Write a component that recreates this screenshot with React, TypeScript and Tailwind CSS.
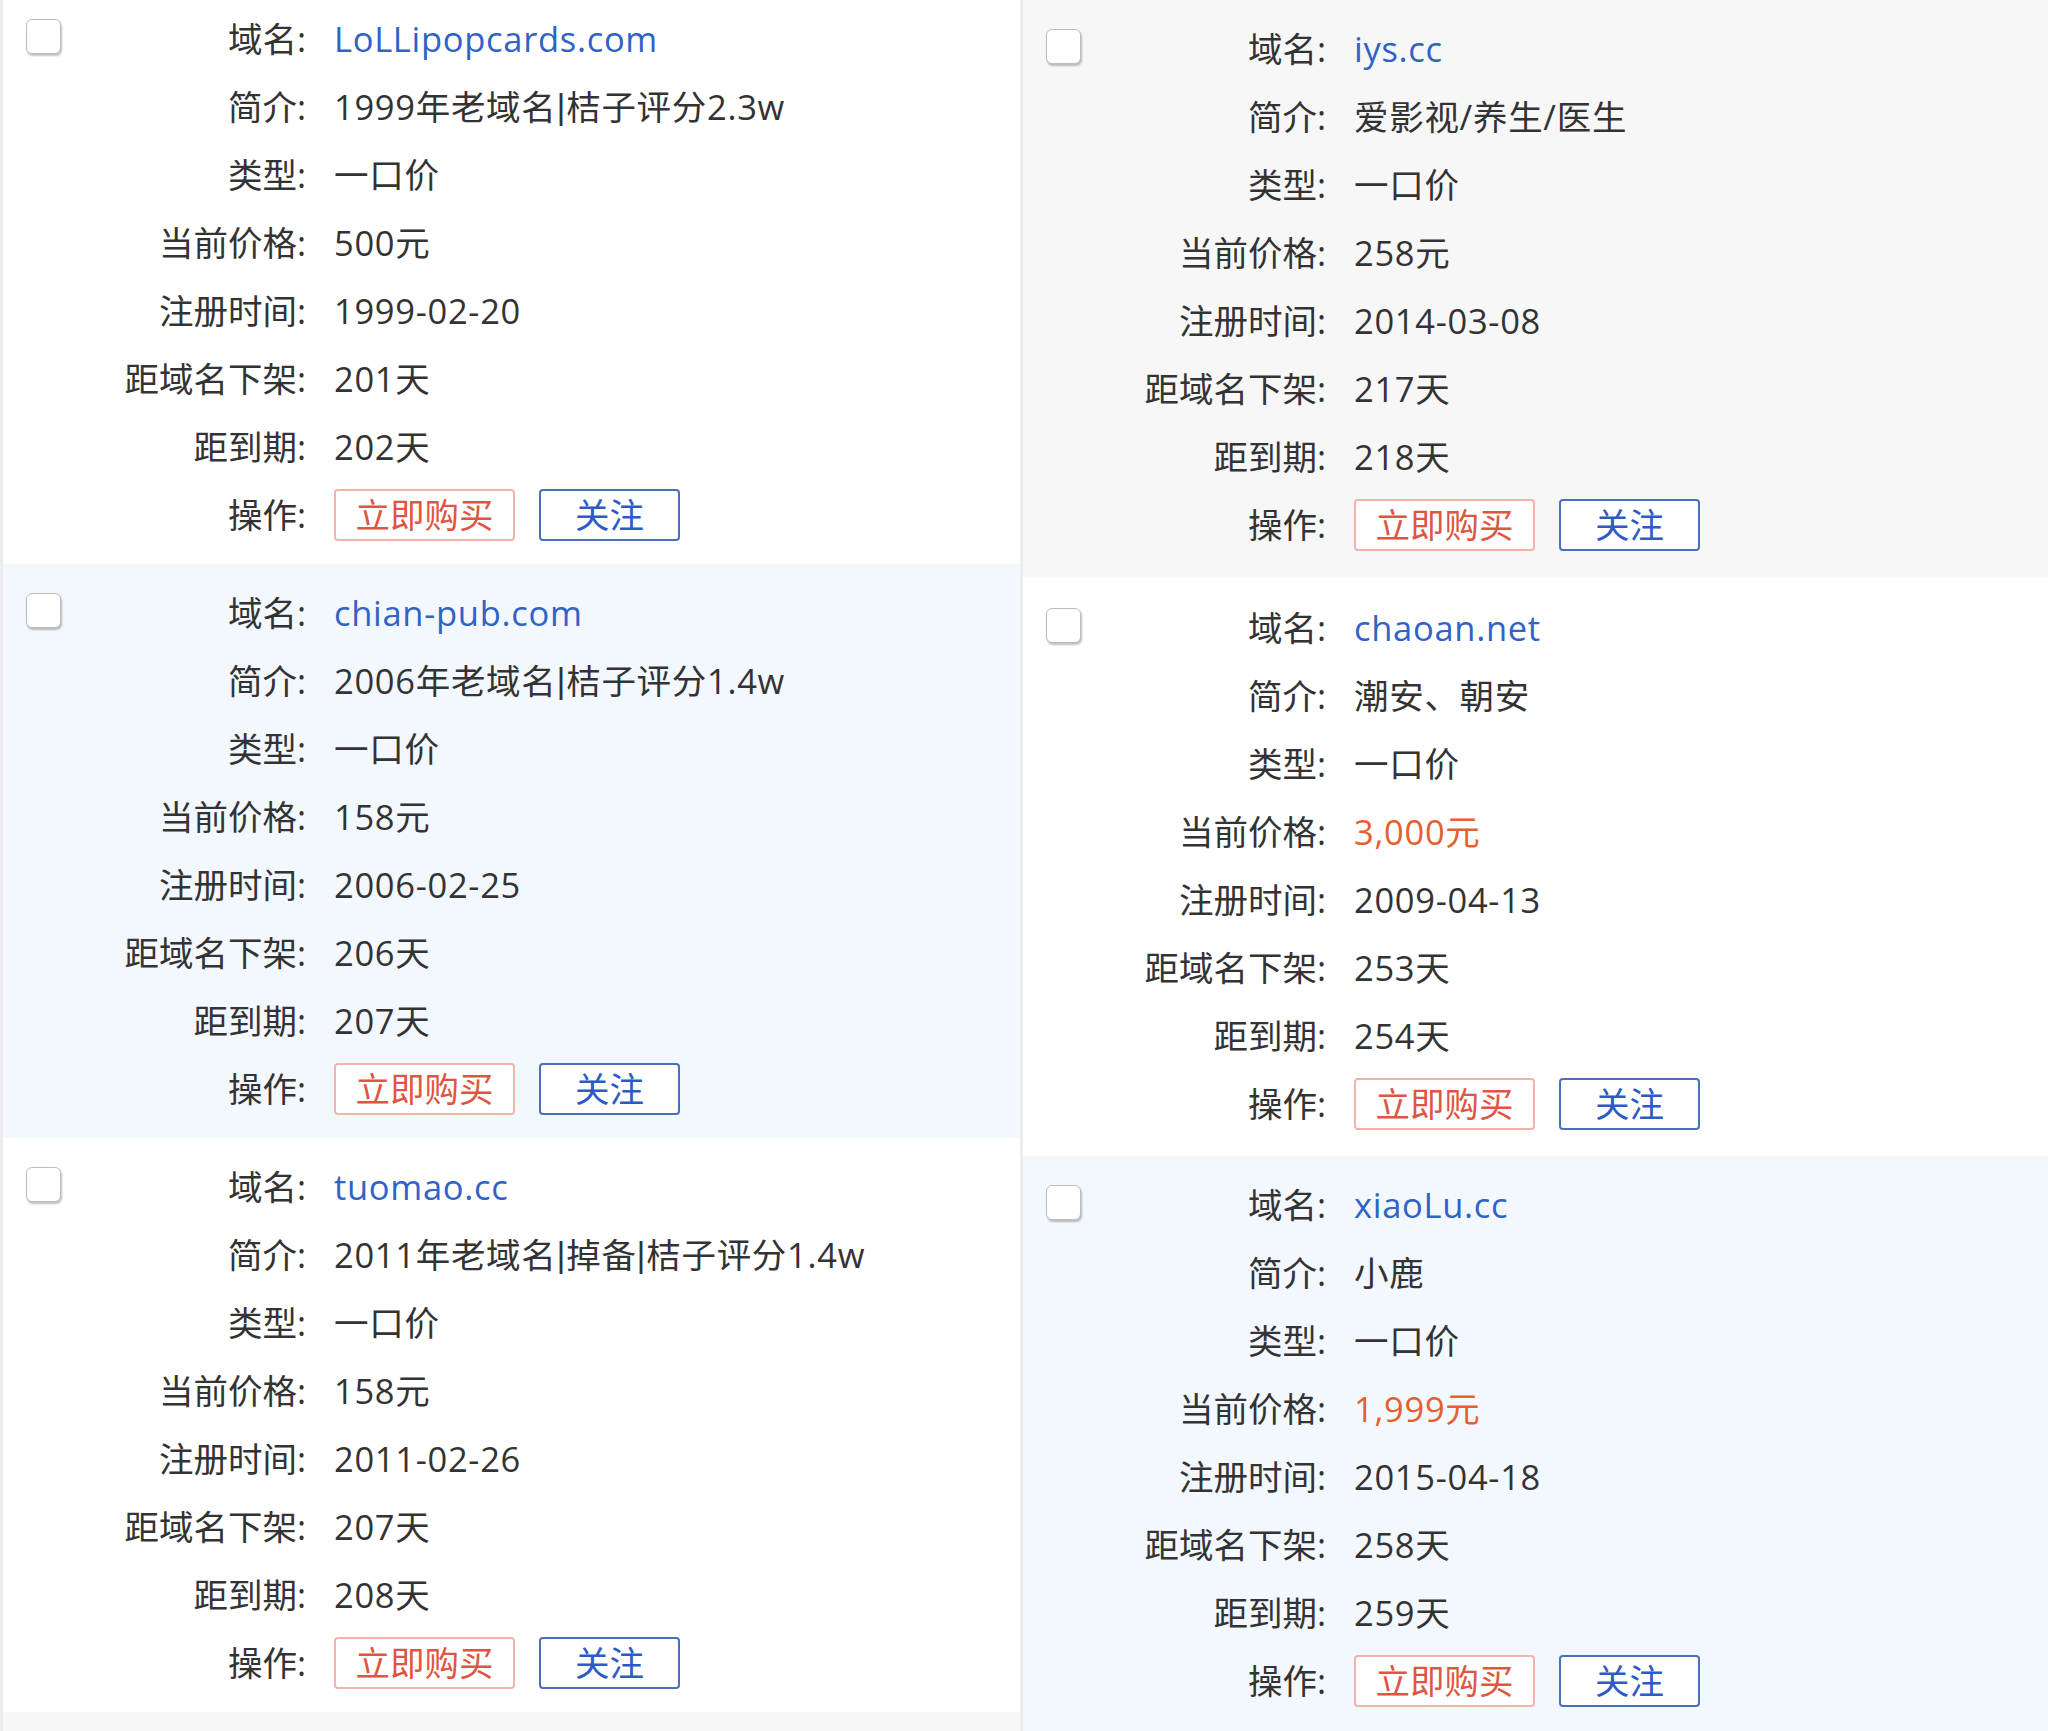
import React from 'react';

interface Domain {
  name: string;
  intro: string;
  kind: string;
  price: string;
  hot?: boolean;
  registered: string;
  offShelf: string;
  expire: string;
}

const left: Domain[] = [
  { name: 'LoLLipopcards.com', intro: '1999年老域名|桔子评分2.3w', kind: '一口价', price: '500元', registered: '1999-02-20', offShelf: '201天', expire: '202天' },
  { name: 'chian-pub.com', intro: '2006年老域名|桔子评分1.4w', kind: '一口价', price: '158元', registered: '2006-02-25', offShelf: '206天', expire: '207天' },
  { name: 'tuomao.cc', intro: '2011年老域名|掉备|桔子评分1.4w', kind: '一口价', price: '158元', registered: '2011-02-26', offShelf: '207天', expire: '208天' },
];

const right: Domain[] = [
  { name: 'iys.cc', intro: '爱影视/养生/医生', kind: '一口价', price: '258元', registered: '2014-03-08', offShelf: '217天', expire: '218天' },
  { name: 'chaoan.net', intro: '潮安、朝安', kind: '一口价', price: '3,000元', hot: true, registered: '2009-04-13', offShelf: '253天', expire: '254天' },
  { name: 'xiaoLu.cc', intro: '小鹿', kind: '一口价', price: '1,999元', hot: true, registered: '2015-04-18', offShelf: '258天', expire: '259天' },
];

// the separator bar is much tighter in the original, so draw it in a narrow face
function Intro({ text }: { text: string }) {
  const parts = text.split('|');
  return (
    <>
      {parts.map((p, i) => (
        <React.Fragment key={i}>
          {i > 0 && <span className="font-['Liberation_Sans']">|</span>}
          {p}
        </React.Fragment>
      ))}
    </>
  );
}

function Row({ label, children }: { label: string; children: React.ReactNode }) {
  return (
    <div className="flex h-[68px] items-center">
      <span className="w-[245px] shrink-0 text-right">{label}</span>
      <span className="ml-[28px] flex items-center tracking-[0.7px]">{children}</span>
    </div>
  );
}

function Card({ d, bg, pad }: { d: Domain; bg: string; pad: string }) {
  return (
    <div className={`flex ${bg} ${pad}`}>
      <div className="ml-[23px] mt-[14px] h-[35px] w-[35px] shrink-0 rounded-[6px] border border-[#bdbdbd] bg-white shadow-[1px_2px_2px_rgba(0,0,0,0.25)]" />
      <div className="flex flex-col">
        <Row label="域名:">
          <span className="text-[#2f63c6]">{d.name}</span>
        </Row>
        <Row label="简介:">
          <Intro text={d.intro} />
        </Row>
        <Row label="类型:">{d.kind}</Row>
        <Row label="当前价格:">
          <span className={d.hot ? 'text-[#e5602f]' : ''}>{d.price}</span>
        </Row>
        <Row label="注册时间:">{d.registered}</Row>
        <Row label="距域名下架:">{d.offShelf}</Row>
        <Row label="距到期:">{d.expire}</Row>
        <Row label="操作:">
          <button className="flex h-[52px] w-[181px] items-center justify-center rounded-[4px] border-2 border-[#f1b3aa] bg-white tracking-normal text-[#de5641]">
            立即购买
          </button>
          <button className="ml-[24px] flex h-[52px] w-[141px] items-center justify-center rounded-[4px] border-2 border-[#4a70bb] bg-white tracking-normal text-[#2c5bc8]">
            关注
          </button>
        </Row>
      </div>
    </div>
  );
}

export default function App() {
  return (
    <div
      className="flex h-[1731px] w-[2048px] overflow-hidden bg-white text-[34.5px] leading-none text-[#333333]"
      style={{ fontFamily: '"Open Sans", "Noto Sans CJK SC", sans-serif' }}
    >
      <div className="flex w-[1020px] shrink-0 flex-col border-l-[3px] border-[#ececec]">
        <Card d={left[0]} bg="bg-white" pad="pt-[5px] pb-[15px]" />
        <Card d={left[1]} bg="bg-[#f3f8fe]" pad="pt-[15px] pb-[15px]" />
        <Card d={left[2]} bg="bg-white" pad="pt-[15px] pb-[15px]" />
        <div className="flex-1 bg-[#f7f7f7]" />
      </div>
      <div className="flex flex-1 flex-col border-l-[3px] border-[#ececec]">
        <Card d={right[0]} bg="bg-[#f7f7f7]" pad="pt-[15px] pb-[18px]" />
        <Card d={right[1]} bg="bg-white" pad="pt-[17px] pb-[18px]" />
        <Card d={right[2]} bg="bg-[#f3f8fe]" pad="pt-[15px] pb-[18px]" />
      </div>
    </div>
  );
}
